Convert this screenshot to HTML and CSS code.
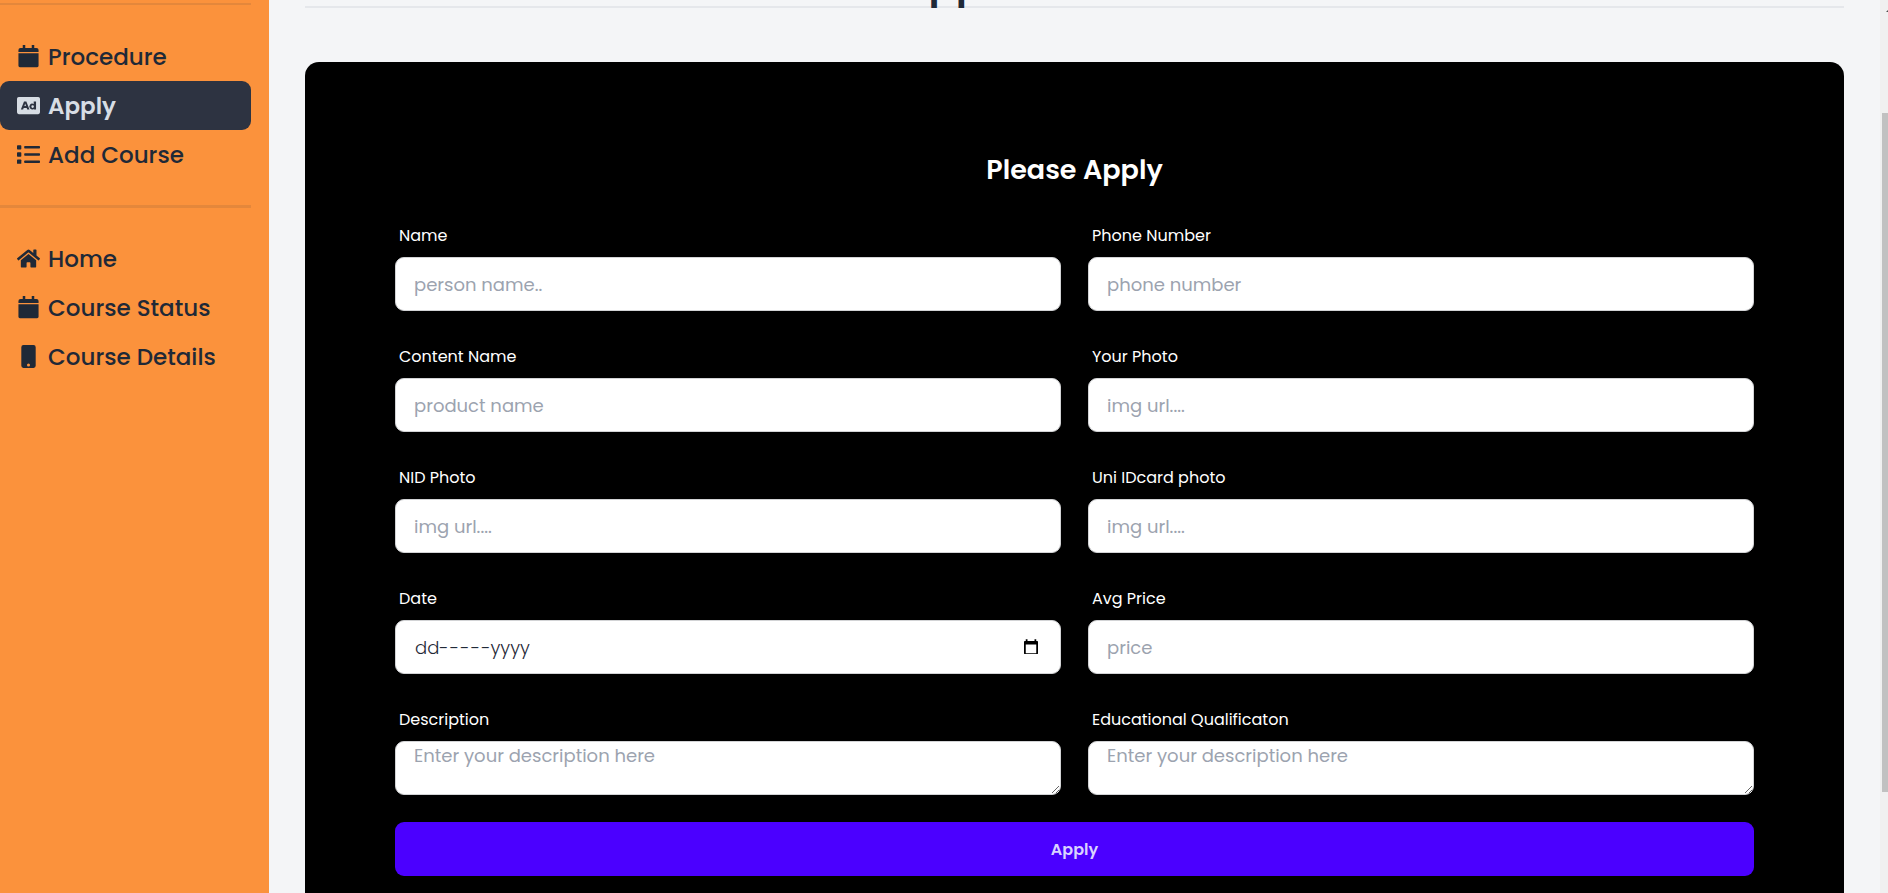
FILE: index.html
```html
<!DOCTYPE html>
<html lang="en">
<head>
  <meta charset="utf-8">
  <meta name="viewport" content="width=device-width, initial-scale=1">
  <title>Application Form</title>
  <link rel="stylesheet" href="styles.css">
</head>
<body>
  <div class="layout">
    <aside class="sidebar">
      <hr class="divider divider-top">
      <nav class="menu">
        <a class="menu-item" href="#procedure">
          <svg class="icon" viewBox="0 0 512 512" aria-hidden="true"><path d="M32 112a48 48 0 0 1 48-48h48V0h56v64h144V0h56v64h48a48 48 0 0 1 48 48v44H32zM32 184h448v280a32 32 0 0 1-32 32H64a32 32 0 0 1-32-32z"/></svg>
          Procedure
        </a>
        <a class="menu-item active" href="#apply" aria-current="page">
          <svg class="icon" viewBox="0 0 512 512" aria-hidden="true"><path fill-rule="evenodd" d="M40 64h432a40 40 0 0 1 40 40v304a40 40 0 0 1-40 40H40a40 40 0 0 1-40-40V104a40 40 0 0 1 40-40zM86 345h51l11-34h68l11 34h51L208 165h-52zM164 268l18-57 18 57zM372 165v55a66 66 0 1 0 6 113v12h46V165zM348 252a28 28 0 1 1 0 57 28 28 0 0 1 0-57z"/></svg>
          Apply
        </a>
        <a class="menu-item" href="#add-course">
          <svg class="icon" viewBox="0 0 512 512" aria-hidden="true"><rect y="48" width="96" height="96" rx="16"/><rect y="208" width="96" height="96" rx="16"/><rect y="368" width="96" height="96" rx="16"/><rect x="160" y="68" width="352" height="56" rx="16"/><rect x="160" y="228" width="352" height="56" rx="16"/><rect x="160" y="388" width="352" height="56" rx="16"/></svg>
          Add Course
        </a>
      </nav>
      <hr class="divider">
      <nav class="menu">
        <a class="menu-item" href="#home">
          <svg class="icon" viewBox="0 0 576 512" aria-hidden="true"><path d="M280.4 148.3 96 300.1V464a16 16 0 0 0 16 16l112-.3a16 16 0 0 0 16-16V368a16 16 0 0 1 16-16h64a16 16 0 0 1 16 16v95.6a16 16 0 0 0 16 16.1l112 .3a16 16 0 0 0 16-16V300L295.700 148.300a12.200 12.200 0 0 0-15.300 0zM571.600 251.500 488 182.600V44.100a12 12 0 0 0-12-12h-56a12 12 0 0 0-12 12v72.600L318.500 43a48 48 0 0 0-61 0L4.300 251.500a12 12 0 0 0-1.600 16.900l25.500 31a12 12 0 0 0 16.900 1.600l235.200-193.700a12.200 12.200 0 0 1 15.300 0L530.900 301a12 12 0 0 0 16.900-1.600l25.500-31a12 12 0 0 0-1.700-16.900z"/></svg>
          Home
        </a>
        <a class="menu-item" href="#course-status">
          <svg class="icon" viewBox="0 0 512 512" aria-hidden="true"><path d="M32 112a48 48 0 0 1 48-48h48V0h56v64h144V0h56v64h48a48 48 0 0 1 48 48v44H32zM32 184h448v280a32 32 0 0 1-32 32H64a32 32 0 0 1-32-32z"/></svg>
          Course Status
        </a>
        <a class="menu-item" href="#course-details">
          <svg class="icon" viewBox="0 0 512 512" aria-hidden="true"><path fill-rule="evenodd" d="M144 0h224a48 48 0 0 1 48 48v416a48 48 0 0 1-48 48H144a48 48 0 0 1-48-48V48a48 48 0 0 1 48-48zM256 412a34 34 0 1 0 0 68 34 34 0 0 0 0-68z"/></svg>
          Course Details
        </a>
      </nav>
    </aside>

    <main class="content">
      <header class="page-header">
        <h1 class="page-title">Application Form</h1>
      </header>

      <form class="card">
        <h2 class="card-title">Please Apply</h2>
        <div class="fields">
          <div class="field">
            <label class="label" for="name">Name</label>
            <input class="control" id="name" type="text" placeholder="person name..">
          </div>
          <div class="field">
            <label class="label" for="phone">Phone Number</label>
            <input class="control" id="phone" type="text" placeholder="phone number">
          </div>
          <div class="field">
            <label class="label" for="content">Content Name</label>
            <input class="control" id="content" type="text" placeholder="product name">
          </div>
          <div class="field">
            <label class="label" for="photo">Your Photo</label>
            <input class="control" id="photo" type="text" placeholder="img url....">
          </div>
          <div class="field">
            <label class="label" for="nid">NID Photo</label>
            <input class="control" id="nid" type="text" placeholder="img url....">
          </div>
          <div class="field">
            <label class="label" for="idcard">Uni IDcard photo</label>
            <input class="control" id="idcard" type="text" placeholder="img url....">
          </div>
          <div class="field">
            <label class="label" for="date">Date</label>
            <div class="control date-control">
              <input class="date-input" id="date" type="text" value="dd-&hairsp;-&hairsp;-&hairsp;-&hairsp;-yyyy">
              <button class="date-button" type="button" aria-label="Open calendar">
                <svg class="date-icon" viewBox="0 0 16 18" aria-hidden="true"><path fill-rule="evenodd" d="M2 0h2v2h8V0h2v2h1a1 1 0 0 1 1 1v13a1 1 0 0 1-1 1H1a1 1 0 0 1-1-1V3a1 1 0 0 1 1-1h1zM2 6v10h12V6z"/></svg>
              </button>
            </div>
          </div>
          <div class="field">
            <label class="label" for="price">Avg Price</label>
            <input class="control" id="price" type="text" placeholder="price">
          </div>
          <div class="field">
            <label class="label" for="description">Description</label>
            <textarea class="control control-area" id="description" placeholder="Enter your description here"></textarea>
          </div>
          <div class="field">
            <label class="label" for="education">Educational Qualificaton</label>
            <textarea class="control control-area" id="education" placeholder="Enter your description here"></textarea>
          </div>
        </div>
        <button class="submit" type="submit">Apply</button>
      </form>
    </main>

    <div class="scrollbar" aria-hidden="true">
      <svg class="scroll-arrow" viewBox="0 0 8 5"><path d="M4 0 8 4H0z"/></svg>
      <div class="scroll-thumb"></div>
    </div>
  </div>
</body>
</html>
```

FILE: styles.css
```css
* {
  box-sizing: border-box;
}

body {
  margin: 0;
  font-family: Poppins, Inter, "Open Sans", sans-serif;
  font-size: 18px;
  color: #1f2937;
  background: #f4f5f7;
}

.layout {
  display: flex;
  height: 100vh;
  overflow: hidden;
}

.sidebar {
  flex: 0 0 269px;
  padding: 3px 18px 0 0;
  background: #fb923c;
}

.divider {
  height: 3px;
  margin: 26px 0;
  border: 0;
  background: #e4873b;
}

.divider-top {
  height: 2px;
  margin: 0 0 27px;
}

.menu {
  display: flex;
  flex-direction: column;
}

.menu-item {
  display: flex;
  align-items: center;
  gap: 8px;
  height: 49px;
  padding: 0 17px;
  border-radius: 9px;
  font-size: 23px;
  font-weight: 500;
  color: #1f2937;
  text-decoration: none;
}

.menu-item.active {
  font-weight: 600;
  color: #d7dde4;
  background: #2d3341;
}

.icon {
  width: 23px;
  height: 23px;
  fill: currentColor;
}

.content {
  flex: 1;
  min-width: 0;
  padding: 0 36px;
}

.page-header {
  margin-top: -60px;
  padding-top: 20px;
  border-bottom: 2px solid #e5e7eb;
}

.page-title {
  margin: 0;
  font-size: 40px;
  line-height: 46px;
  font-weight: 600;
  text-align: center;
}

.card {
  margin-top: 54px;
  padding: 90px;
  border-radius: 14px;
  color: #fff;
  background: #000;
}

.card-title {
  margin: 0 0 29px;
  font-size: 27px;
  line-height: 36px;
  font-weight: 600;
  text-align: center;
}

.fields {
  display: grid;
  grid-template-columns: 1fr 1fr;
  gap: 27px;
}

.field {
  display: flex;
  flex-direction: column;
}

.label {
  padding: 8px 4px 10px;
  font-size: 16px;
  line-height: 22px;
}

.control {
  width: 100%;
  height: 54px;
  padding: 0 18px;
  border: 1px solid #d2d3d5;
  border-radius: 9px;
  font-family: inherit;
  font-size: 18px;
  color: #1f2937;
  background: #fff;
}

.control::placeholder {
  color: #9ca3af;
  opacity: 1;
}

.control-area {
  display: block;
  line-height: 27px;
  resize: vertical;
}

.date-control {
  display: flex;
  align-items: center;
  padding-right: 22px;
}

.date-input {
  flex: 1;
  min-width: 0;
  padding: 0 1px;
  border: 0;
  font: inherit;
  font-weight: 300;
  color: inherit;
  background: transparent;
}

.date-button {
  display: flex;
  padding: 0;
  border: 0;
  background: transparent;
}

.date-icon {
  width: 14px;
  height: 16px;
}

.submit {
  display: block;
  width: 100%;
  height: 54px;
  margin-top: 27px;
  border: 0;
  border-radius: 9px;
  font-family: inherit;
  font-size: 16px;
  font-weight: 600;
  color: #d9d2ff;
  background: #4b00ff;
}

.scrollbar {
  flex: 0 0 8px;
  display: flex;
  flex-direction: column;
  align-items: flex-end;
  overflow: hidden;
  background: #f0f0f0;
}

.scroll-arrow {
  flex: none;
  width: 8px;
  height: 5px;
  margin: 8px -6px 100px 0;
  fill: #505050;
}

.scroll-thumb {
  width: 6px;
  height: 76vh;
  background: #c1c1c1;
}
```
